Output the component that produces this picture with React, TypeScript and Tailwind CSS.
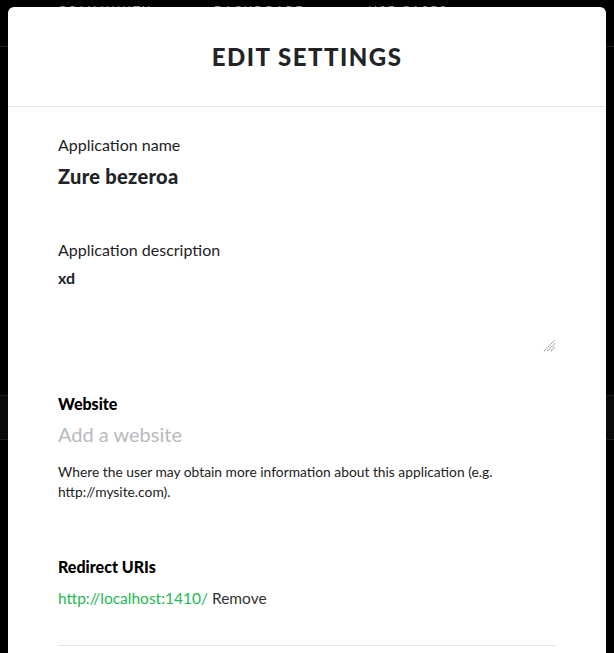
import React from 'react';

const font = { fontFamily: 'Lato, "Noto Sans", sans-serif' };

const Backdrop: React.FC = () => (
    <div className="absolute inset-0">
        <nav className="flex items-start h-[47px] border-b border-[#222] pl-[58px] gap-[62px] pt-[1px]">
            <span className="text-[12px] tracking-[2px] text-[#888]">COMMUNITY</span>
            <span className="text-[12px] tracking-[2px] text-[#888]">DASHBOARD</span>
            <span className="text-[12px] tracking-[2px] text-[#888]">USE CASES</span>
        </nav>
        <div className="mt-[348px] h-[45px] border-y border-[#1c1c1c] bg-[#0a0a0a]" />
    </div>
);

const App: React.FC = () => {
    return (
        <div className="relative h-[653px] w-[614px] overflow-hidden bg-black" style={font}>
            <Backdrop />
            <div className="absolute left-2 right-2 top-[7px] bottom-[-20px] rounded-[6px] bg-white text-[#222326]">
                <header className="flex h-[100px] items-center justify-center border-b border-[#e5e5e5]">
                    <h1 className="text-[24px] font-black tracking-[1.5px] pt-[1px]">EDIT SETTINGS</h1>
                </header>
                <div className="px-[50px] pt-[28px]">
                    <label className="block text-[16px] leading-[20px]">Application name</label>
                    <div className="mt-[10px] text-[20px] font-black leading-[22px] tracking-[0.3px]">Zure bezeroa</div>

                    <label className="mt-[53px] block text-[16px] leading-[20px]">Application description</label>
                    <div className="relative mt-[7px] h-[85px] w-[498px]">
                        <div className="text-[16px] font-bold leading-[22px]">xd</div>
                        <svg className="absolute right-0 bottom-0" width="13" height="13" viewBox="0 0 13 13">
                            <path d="M1 12 L12 1 M4.5 12 L12 4.5 M8 12 L12 8" stroke="#888" strokeWidth="1.2" strokeDasharray="1 1" />
                        </svg>
                    </div>

                    <label className="mt-[42px] block text-[16px] font-black leading-[20px] text-black">Website</label>
                    <div className="mt-[8px] text-[20px] leading-[24px] text-[#b9b9bd]">Add a website</div>
                    <p className="mt-[16px] w-[480px] text-[13.8px] leading-[20px] text-[#222]">
                        Where the user may obtain more information about this application (e.g. http://mysite.com).
                    </p>

                    <label className="mt-[55px] block text-[16px] font-black leading-[20px] text-black">Redirect URIs</label>
                    <div className="mt-[10px] text-[15.5px] leading-[22px]">
                        <span className="text-[#1db954]">http://localhost:1410/</span>{' '}
                        <span className="text-[#333]">Remove</span>
                    </div>
                    <div className="mt-[36px] w-[498px] border-t border-[#e5e5e5]" />
                </div>
            </div>
        </div>
    );
};

export default App;
